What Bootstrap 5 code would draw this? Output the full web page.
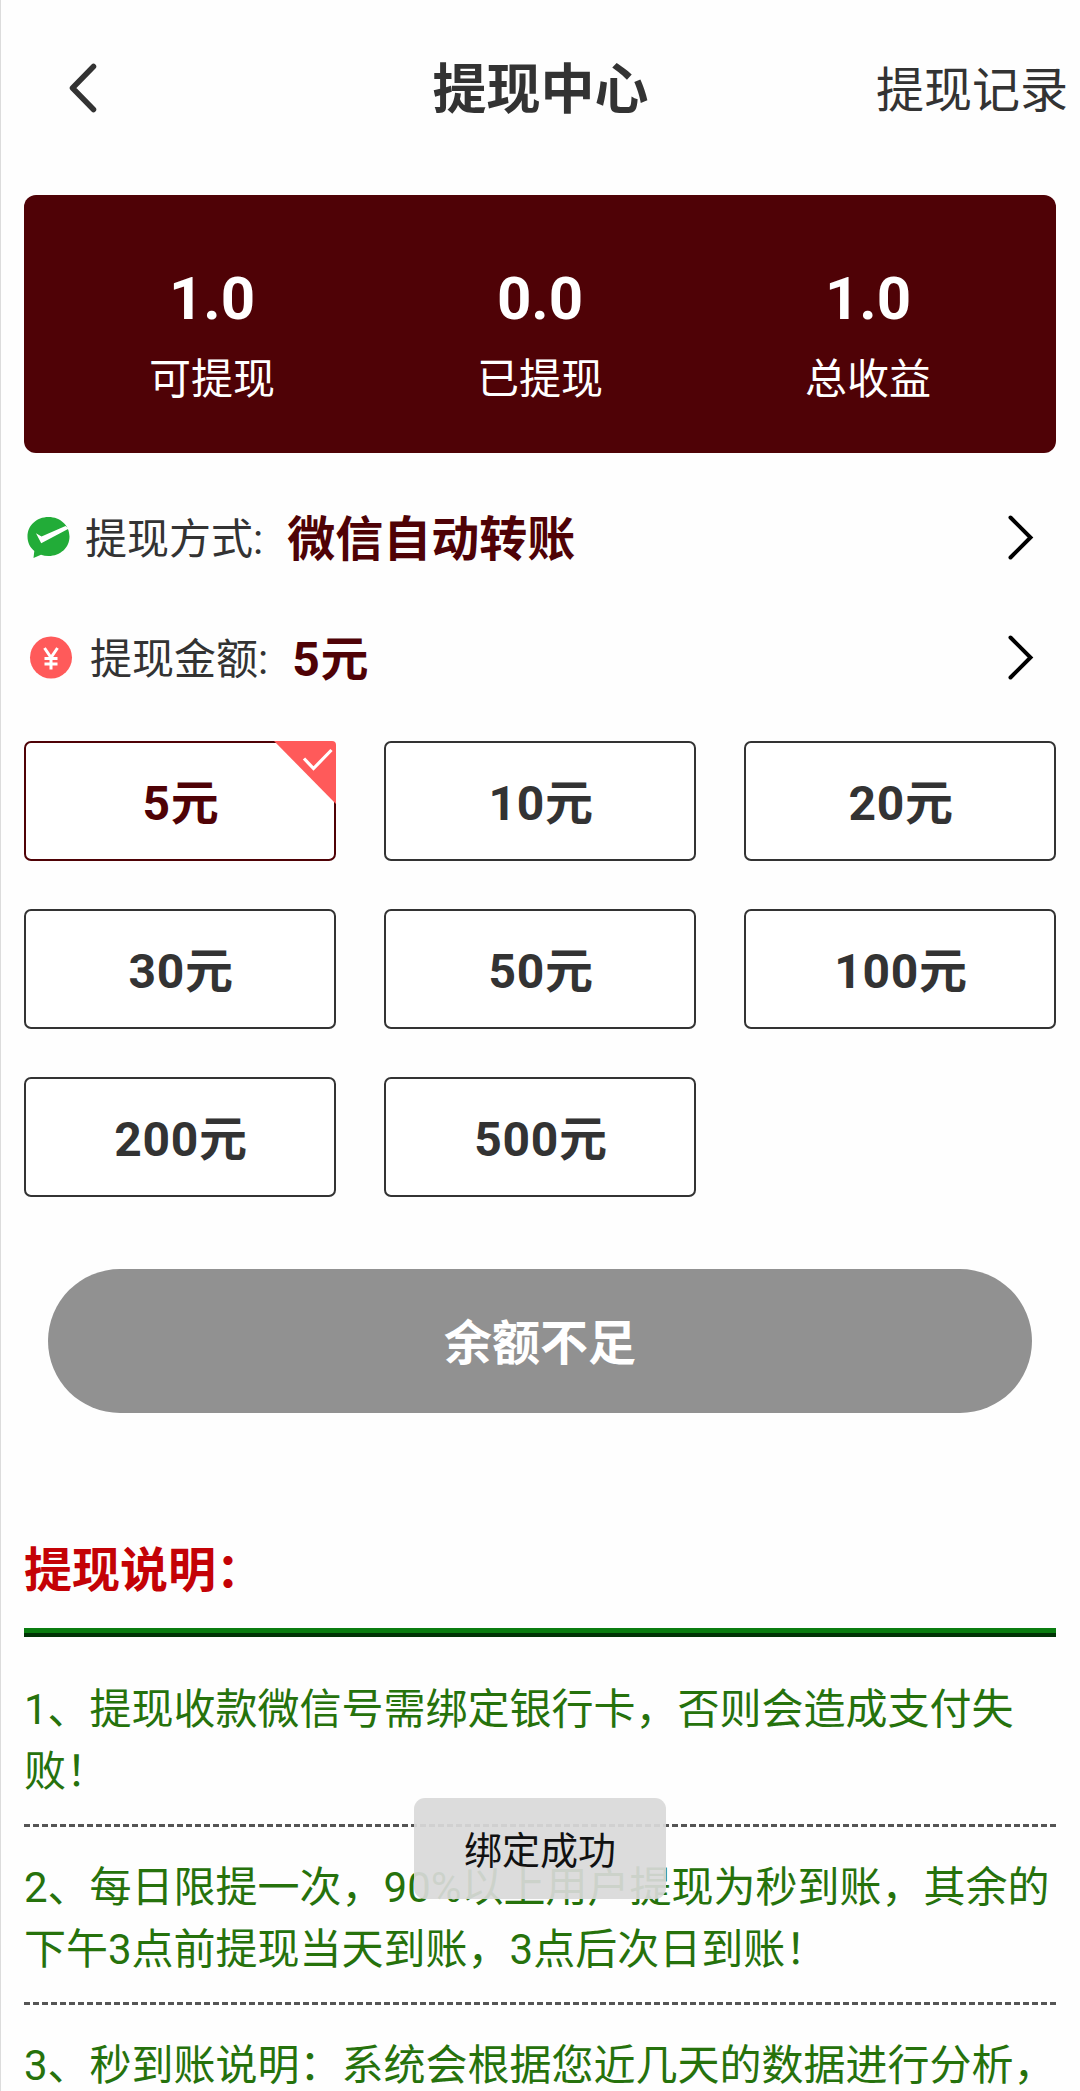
<!DOCTYPE html>
<html lang="zh-CN">
<head>
<meta charset="utf-8">
<meta name="viewport" content="width=device-width, initial-scale=1">
<title>提现中心</title>
<link href="https://cdn.jsdelivr.net/npm/bootstrap@5.3.0/dist/css/bootstrap.min.css" rel="stylesheet">
<style>
:root{--maroon:#4f0206;--ink:#333}
html{overflow:hidden}
body{font-family:Roboto,"Noto Sans CJK SC",sans-serif;color:var(--ink);background:#fefefe;height:2091px;overflow:hidden;font-size:42px;line-height:1.5}
.screen{height:2091px;border-left:1px solid #dcdcdc;padding-left:23px;padding-right:24px}
.topbar{height:195px;padding-bottom:14px;margin-right:-12px}
.topbar>*{flex:1 1 0;width:0}
.back-svg{margin:-5px 0 0 43px}
.page-title{font-size:54px;font-weight:700;line-height:1;margin:0;padding-right:11px}
.history-link{font-size:48px;line-height:1;color:var(--ink);text-decoration:none;text-align:right}
.stats{height:258px;background:var(--maroon);border-radius:12px;color:#fff;padding:68px 24px 0}
.stat-num{font-size:60px;font-weight:700;line-height:72px}
.stat-label{line-height:60px;margin-top:15px}
.opt-row{height:120px;padding-right:22px}
.opt-row.first{margin-top:25px}
.opt-label{line-height:1;white-space:pre;padding-top:4px;margin-left:1px}
.opt-value{font-size:48px;font-weight:700;line-height:1;color:var(--maroon);padding-top:4px}
.yuan{letter-spacing:.7px}
.amounts{display:grid;grid-template-columns:repeat(3,312px);gap:48px;margin-top:23px}
.amount-btn{height:120px;border:2px solid var(--ink);border-radius:7px;font-size:48px;font-weight:700;color:var(--ink);padding:5px 0 0 2px;line-height:1;background:#fff;letter-spacing:.7px}
.amount-btn.chosen{border-color:var(--maroon);color:var(--maroon)}
.corner{top:-2px;right:-2px}
.submit-btn{height:144px;margin:72px 24px 0;padding-top:11px;background:#919191;color:#fff;font-size:48px;font-weight:700}
.notes-title{font-size:48px;font-weight:700;color:#c40206;line-height:72px;margin:122px 0 0}
.ridge{height:9px;background:linear-gradient(#0a7d10 0 55%,#003305 55%);margin-top:21px}
.note{color:#26720c;line-height:62.4px;padding:33px 0 0;height:178px;background:repeating-linear-gradient(90deg,#555 0 6px,transparent 6px 9px) 0 0/100% 3px no-repeat}
.note.opening{height:187px;padding-top:42px;background:none}
.toast-tip{left:414px;top:1798px;width:252px;height:101px;padding-top:4px;border-radius:11px;background:rgba(217,217,217,.93);color:#111;font-size:38px;line-height:1;z-index:5}
</style>
<script src="https://cdn.jsdelivr.net/npm/bootstrap@5.3.0/dist/js/bootstrap.bundle.min.js"></script>
</head>
<body>
<div class="screen">
  <header class="topbar d-flex align-items-center">
    <a href="#" class="d-flex"><svg class="back-svg" width="32" height="52" viewBox="0 0 32 52" fill="none" stroke="#333" stroke-width="5.500" stroke-linecap="round" stroke-linejoin="round"><path d="M26.500 4.500 5.500 26 26.500 47.500"/></svg></a>
    <h1 class="page-title text-center">提现中心</h1>
    <a href="#" class="history-link">提现记录</a>
  </header>

  <section class="stats">
    <div class="row g-0 text-center">
      <div class="col"><div class="stat-num">1.0</div><div class="stat-label">可提现</div></div>
      <div class="col"><div class="stat-num">0.0</div><div class="stat-label">已提现</div></div>
      <div class="col"><div class="stat-num">1.0</div><div class="stat-label">总收益</div></div>
    </div>
  </section>

  <div class="opt-row first d-flex align-items-center">
    <svg width="60" height="48" viewBox="0 0 60 48"><path d="M24.500 3C12.500 3 3.500 11.500 3.500 22.500c0 6 2.500 11 6.800 14.500L9.500 44l7.500-3.200c2.300.8 4.800 1.200 7.500 1.200 12 0 21-8.500 21-19.500S36.500 3 24.500 3z" fill="#22ac38"/><path d="M12 19.300 17.500 22.500 41.500 12 45 14.500 17.200 29.300z" fill="#fff"/></svg>
    <span class="opt-label">提现方式:</span><span class="opt-value ms-4">微信自动转账</span>
    <svg class="ms-auto" width="28" height="48" viewBox="0 0 28 48" fill="none" stroke="#000" stroke-width="4" stroke-linecap="round"><path d="M4.500 3.500 24.500 23.500 4.500 43.500"/></svg>
  </div>
  <div class="opt-row d-flex align-items-center">
    <svg width="65" height="48" viewBox="0 0 65 48"><circle cx="27" cy="23.500" r="21" fill="#ff5a5a"/><path d="M20.500 14 27 23.500 33.500 14M27 23.500V35.500M20.500 24.500h13M20.500 30h13" fill="none" stroke="#fff" stroke-width="3"/></svg>
    <span class="opt-label">提现金额:</span><span class="opt-value yuan ms-4">5元</span>
    <svg class="ms-auto" width="28" height="48" viewBox="0 0 28 48" fill="none" stroke="#000" stroke-width="4" stroke-linecap="round"><path d="M4.500 3.500 24.500 23.500 4.500 43.500"/></svg>
  </div>

  <section class="amounts">
    <button class="btn amount-btn chosen position-relative">5元<svg class="corner position-absolute" width="62" height="63" viewBox="0 0 62 63"><path d="M0 0H58Q62 0 62 4V63z" fill="#ff5a5a"/><path d="M30 17.500 39.500 27.500 57.500 9" fill="none" stroke="#fff" stroke-width="3.200"/></svg></button>
    <button class="btn amount-btn">10元</button>
    <button class="btn amount-btn">20元</button>
    <button class="btn amount-btn">30元</button>
    <button class="btn amount-btn">50元</button>
    <button class="btn amount-btn">100元</button>
    <button class="btn amount-btn">200元</button>
    <button class="btn amount-btn">500元</button>
  </section>

  <div class="d-grid"><button class="btn rounded-pill submit-btn">余额不足</button></div>

  <section>
    <h2 class="notes-title">提现说明：</h2>
    <div class="ridge"></div>
    <div class="note opening">1、提现收款微信号需绑定银行卡，否则会造成支付失败！</div>
    <div class="note">2、每日限提一次，90%以上用户提现为秒到账，其余的下午3点前提现当天到账，3点后次日到账！</div>
    <div class="note">3、秒到账说明：系统会根据您近几天的数据进行分析，</div>
  </section>
</div>
<div class="toast-tip position-absolute d-flex align-items-center justify-content-center">绑定成功</div>
</body>
</html>
